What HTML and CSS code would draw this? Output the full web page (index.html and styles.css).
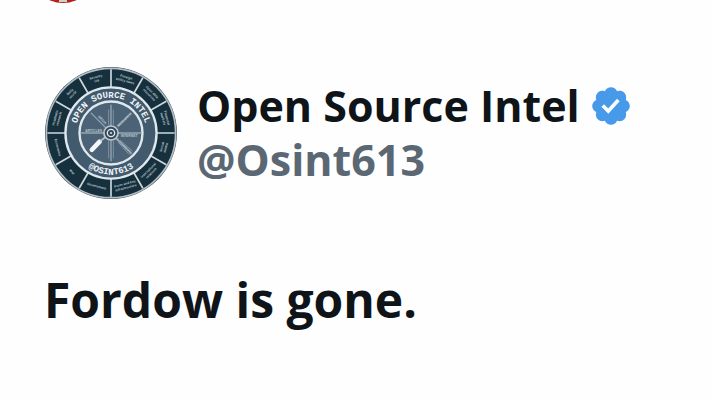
FILE: index.html
```
<!DOCTYPE html>
<html lang="en">
<head>
  <meta charset="UTF-8">
  <meta name="viewport" content="width=device-width, initial-scale=1.0">
  <title>Open Source Intel</title>
  <link rel="stylesheet" href="styles.css">
</head>
<body>
  <!-- end of the previous post, scrolled away -->
  <div class="previous">
    <svg class="previous-avatar" viewBox="0 0 66 66" aria-hidden="true">
      <circle cx="33" cy="33" r="33" fill="#b5221c"/>
      <rect x="29" y="56" width="8" height="9" fill="#d8cfc4"/>
    </svg>
  </div>

  <article class="post">
    <header class="author">
      <svg class="avatar" viewBox="-200 -200 400 400" role="img" aria-label="Open Source Intel logo">
        <defs>
          <path id="arcTop" d="M-106 0A106 106 0 0 1 106 0"/>
          <path id="arcBottom" d="M-124 0A124 124 0 0 0 124 0"/>
        </defs>
        <circle r="197" fill="#3b4a56"/>
        <circle r="193" fill="#16303d" stroke="#b4bfc5" stroke-width="5"/>
        <g stroke="#cdd7dc" stroke-width="5">
          <path d="M0-190V190M-190 0H190"/>
          <path d="M-95-165L95 165M95-165L-95 165M-165-95L165 95M165-95L-165 95"/>
        </g>
        <circle r="136" fill="#425a6e" stroke="#dfe8ec" stroke-width="7"/>
        <circle r="94" fill="#4c6377" stroke="#dfe8ec" stroke-width="7"/>
        <g stroke="#94a6b3" stroke-width="4">
          <path d="M0-84V84M-90 0H90"/>
          <path d="M-60-60L60 60M60-60L20-20"/>
          <path d="M-7-70V-24M7-70V-24M-7 24V76M7 24V76M28 22L64 54M22 28L54 64" stroke-width="2"/>
        </g>
        <path d="M-57 50L-34 26" stroke="#f4f7f8" stroke-width="14" stroke-linecap="round"/>
        <path d="M-32 24L-14 10" stroke="#bcc8cf" stroke-width="5"/>
        <circle r="21" fill="#33495a" stroke="#bcc8cf" stroke-width="5"/>
        <circle r="11" fill="none" stroke="#dfe8ec" stroke-width="4"/>
        <circle r="3" fill="#dfe8ec"/>
        <g class="ring-text">
          <text><textPath href="#arcTop" startOffset="50%">OPEN SOURCE INTEL</textPath></text>
          <text><textPath href="#arcBottom" startOffset="50%">@OSINT613</textPath></text>
        </g>
        <g class="spoke-text">
          <text x="-52" y="-4">ARTICLES</text>
          <text x="54" y="12">INTERNET</text>
          <text transform="rotate(45)" x="-46" y="-6">MEDIA</text>
          <text transform="rotate(-45)" x="56" y="4">RESEARCH</text>
          <text transform="rotate(45)" x="56" y="4">DOCUMENTS</text>
        </g>
        <g class="segment-text">
          <text transform="translate(43 -158) rotate(15)"><tspan x="0" y="-6">Foreign</tspan><tspan x="0" y="6">policy news</tspan></text>
          <text transform="translate(116 -116) rotate(45)"><tspan x="0" y="-6">Open data</tspan><tspan x="0" y="6">resources</tspan></text>
          <text transform="translate(158 -43) rotate(75)"><tspan x="0" y="-6">Financial</tspan><tspan x="0" y="6">markets</tspan></text>
          <text transform="translate(158 43) rotate(-75)"><tspan x="0" y="-3">Social</tspan><tspan x="0" y="9">media</tspan></text>
          <text transform="translate(116 116) rotate(-45)"><tspan x="0" y="-3">International</tspan><tspan x="0" y="9">relations</tspan></text>
          <text transform="translate(43 158) rotate(-15)"><tspan x="0" y="-3">Ports and key</tspan><tspan x="0" y="9">infrastructure</tspan></text>
          <text transform="translate(-43 158) rotate(15)"><tspan x="0" y="4">Government</tspan></text>
          <text transform="translate(-116 116) rotate(45)"><tspan x="0" y="4">War</tspan></text>
          <text transform="translate(-158 43) rotate(75)"><tspan x="0" y="4">Economics</tspan></text>
          <text transform="translate(-158 -43) rotate(-75)"><tspan x="0" y="-6">Academic</tspan><tspan x="0" y="6">research</tspan></text>
          <text transform="translate(-116 -116) rotate(-45)"><tspan x="0" y="-6">Daily</tspan><tspan x="0" y="6">world</tspan></text>
          <text transform="translate(-43 -158) rotate(-15)"><tspan x="0" y="-6">Security</tspan><tspan x="0" y="6">US</tspan></text>
        </g>
      </svg>

      <div class="names">
        <div class="name-row">
          <h1 class="name">Open Source Intel</h1>
          <svg class="verified" viewBox="0 0 24 24" role="img" aria-label="Verified account">
            <path fill="#fefefe" d="M6 7h12v10H6z"/>
            <path fill="#469ae9" d="M22.25 12c0-1.43-.88-2.67-2.19-3.34.46-1.39.2-2.9-.81-3.91s-2.52-1.27-3.91-.81c-.66-1.31-1.91-2.19-3.34-2.19s-2.67.88-3.33 2.19c-1.4-.46-2.91-.2-3.92.81s-1.26 2.52-.8 3.91c-1.31.67-2.2 1.91-2.2 3.34s.89 2.67 2.2 3.34c-.46 1.39-.21 2.9.8 3.91s2.52 1.26 3.91.81c.67 1.31 1.91 2.19 3.34 2.19s2.68-.88 3.34-2.19c1.39.45 2.9.2 3.91-.81s1.27-2.52.81-3.91c1.31-.67 2.19-1.91 2.19-3.34zm-11.71 4.2L6.8 12.46l1.41-1.42 2.26 2.26 4.8-5.23 1.47 1.36-6.2 6.77z"/>
          </svg>
        </div>
        <div class="handle">@Osint613</div>
      </div>
    </header>

    <p class="text">Fordow is gone.</p>
  </article>
</body>
</html>
```

FILE: styles.css
```
* {
  margin: 0;
  padding: 0;
  box-sizing: border-box;
}
body {
  font-family: "Open Sans", "Noto Sans", sans-serif;
  background-color: #fefefe;
  color: #0f1419;
}
.previous {
  display: flex;
  align-items: flex-end;
  height: 3px;
  padding-left: 30px;
  overflow: hidden;
}
.previous-avatar {
  width: 66px;
  height: 66px;
  flex-shrink: 0;
}
.post {
  padding: 63px 44px 40px;
}
.author {
  display: flex;
  align-items: center;
  gap: 19px;
}
.avatar {
  width: 134px;
  height: 134px;
  flex-shrink: 0;
}
.name-row {
  display: flex;
  align-items: center;
  gap: 9px;
}
.name,
.handle {
  font-size: 43px;
  line-height: 54px;
  font-weight: 700;
  white-space: nowrap;
}
.handle {
  color: #5b6874;
}
.verified {
  width: 44px;
  height: 44px;
  flex-shrink: 0;
}
.text {
  margin-top: 68px;
  font-size: 48px;
  line-height: 64px;
  font-weight: 700;
}
.ring-text {
  font-family: "Liberation Mono", monospace;
  font-size: 27px;
  font-weight: 700;
  fill: #eef3f5;
  text-anchor: middle;
}
.spoke-text,
.segment-text {
  font-family: "Liberation Sans", sans-serif;
  font-size: 10px;
  font-weight: 700;
  fill: #b9c5cc;
  text-anchor: middle;
}
```
